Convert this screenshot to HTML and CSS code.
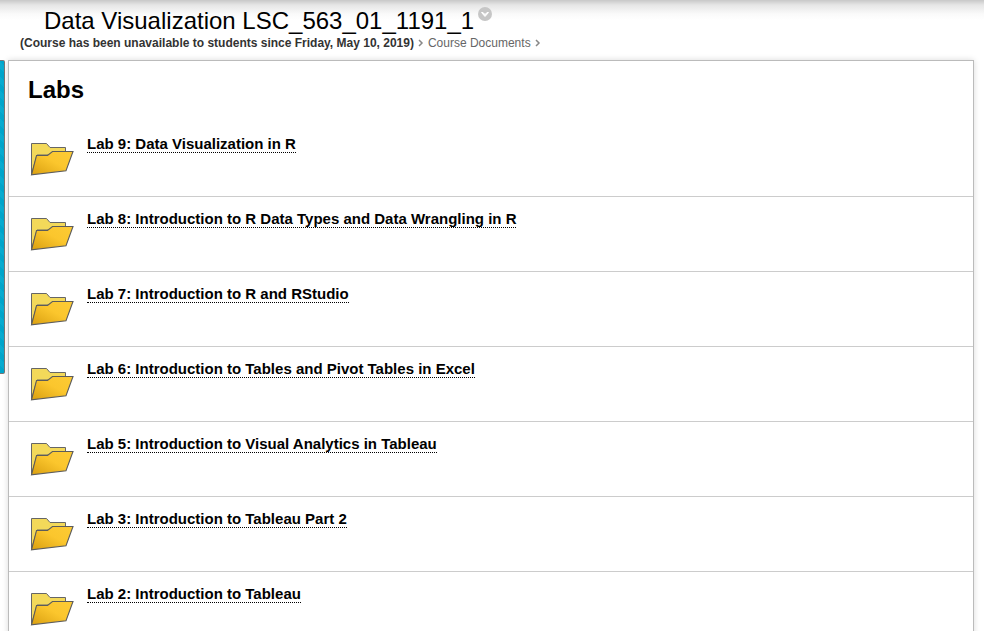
FILE: index.html
```html
<!DOCTYPE html>
<html lang="en">
<head>
<meta charset="utf-8">
<title>Labs – Data Visualization</title>
<link rel="stylesheet" href="styles.css">
</head>
<body>
<svg class="defs" width="0" height="0" aria-hidden="true">
  <defs>
    <linearGradient id="front" x1="0" y1="1" x2="1" y2="0">
      <stop offset="0" stop-color="#d99f10"/>
      <stop offset="0.55" stop-color="#fbc62d"/>
      <stop offset="1" stop-color="#fdcb35"/>
    </linearGradient>
    <symbol id="folder" viewBox="0 0 48 48">
      <path d="M3.5 39.500V8.500H18.500L22 12.500H37.500V20H9Z" fill="#f3d95a" stroke="#666"/>
      <path d="M3.500 39.800L8.500 20.500H19.500L24.500 16.500H45L38 35.800Z" fill="url(#front)" stroke="#5c5c5c" stroke-width="1.100"/>
    </symbol>
  </defs>
</svg>
<header class="top">
  <div class="title-row">
    <h1 class="course">Data Visualization LSC_563_01_1191_1</h1>
    <button class="menu" type="button" aria-label="Course menu">
      <svg width="14" height="14" viewBox="0 0 14 14"><circle cx="7" cy="7" r="7" fill="#c6c6c6"/><path d="M3.500 5.500L5 5.500L7 7.500L9 5.500L10.500 5.500L7 9.500Z" fill="#fff" stroke="#fff"/></svg>
    </button>
  </div>
  <nav class="crumbs">
    <strong>(Course has been unavailable to students since Friday, May 10, 2019)</strong>
    <svg class="sep" width="6" height="8" viewBox="0 0 6 8"><path d="M1 1L4 4L1 7"/></svg>
    <a href="#">Course Documents</a>
    <svg class="sep" width="6" height="8" viewBox="0 0 6 8"><path d="M1 1L4 4L1 7"/></svg>
  </nav>
</header>
<div class="body">
  <div class="side"></div>
  <main class="panel">
    <h2 class="heading">Labs</h2>
    <ul class="list">
      <li class="item"><svg class="icon"><use href="#folder"/></svg><a href="#">Lab 9: Data Visualization in R</a></li>
      <li class="item"><svg class="icon"><use href="#folder"/></svg><a href="#">Lab 8: Introduction to R Data Types and Data Wrangling in R</a></li>
      <li class="item"><svg class="icon"><use href="#folder"/></svg><a href="#">Lab 7: Introduction to R and RStudio</a></li>
      <li class="item"><svg class="icon"><use href="#folder"/></svg><a href="#">Lab 6: Introduction to Tables and Pivot Tables in Excel</a></li>
      <li class="item"><svg class="icon"><use href="#folder"/></svg><a href="#">Lab 5: Introduction to Visual Analytics in Tableau</a></li>
      <li class="item"><svg class="icon"><use href="#folder"/></svg><a href="#">Lab 3: Introduction to Tableau Part 2</a></li>
      <li class="item"><svg class="icon"><use href="#folder"/></svg><a href="#">Lab 2: Introduction to Tableau</a></li>
    </ul>
  </main>
</div>
</body>
</html>
```
FILE: styles.css
```css
* { box-sizing: border-box; }
html { scrollbar-width: none; }
body {
  margin: 0;
  background: #fff;
  color: #000;
  font-family: "Liberation Sans", Arial, sans-serif;
}
.defs { position: absolute; }
.top {
  padding: 7px 20px 9px;
  background: linear-gradient(#c8c8c8, #e6e6e6 5px, #fafafa 14px, #fff 20px);
}
.title-row {
  display: flex;
  align-items: flex-start;
  gap: 4px;
  padding-left: 24px;
}
.course {
  margin: 0;
  font-size: 24px;
  font-weight: 400;
  line-height: 28px;
}
.menu {
  display: block;
  padding: 0;
  border: 0;
  background: none;
  line-height: 0;
}
.crumbs {
  display: flex;
  align-items: center;
  gap: 4px;
  font-size: 12px;
  line-height: 16px;
  color: #333;
  white-space: nowrap;
}
.crumbs a { color: #666; text-decoration: none; }
.sep { fill: none; stroke: #888; stroke-width: 1.5; }
.body {
  display: flex;
  align-items: flex-start;
  gap: 3px;
  padding-right: 10px;
}
.side {
  flex: none;
  width: 5px;
  height: 314px;
  border: 1px solid #777;
  border-left: 0;
  border-radius: 0 2px 2px 0;
  background: repeating-linear-gradient(45deg, #00a5cb 0 5px, #08abd0 5px 10px);
}
.panel {
  flex: 1;
  border: 1px solid #bbb;
  box-shadow: 0 0 6px rgba(0, 0, 0, 0.15);
}
.heading {
  margin: 0;
  padding: 15px 19px 18px;
  font-size: 24px;
  line-height: 28px;
}
.list { margin: 0; padding: 0; list-style: none; }
.item {
  display: flex;
  align-items: flex-start;
  gap: 11px;
  height: 75px;
  padding: 13px 19px 0;
  border-bottom: 1px solid #ccc;
}
.icon { flex: none; width: 48px; height: 48px; }
.item a {
  border-bottom: 1px dotted #000;
  color: #000;
  font-size: 15px;
  font-weight: 700;
  line-height: 17px;
  text-decoration: none;
}
```
